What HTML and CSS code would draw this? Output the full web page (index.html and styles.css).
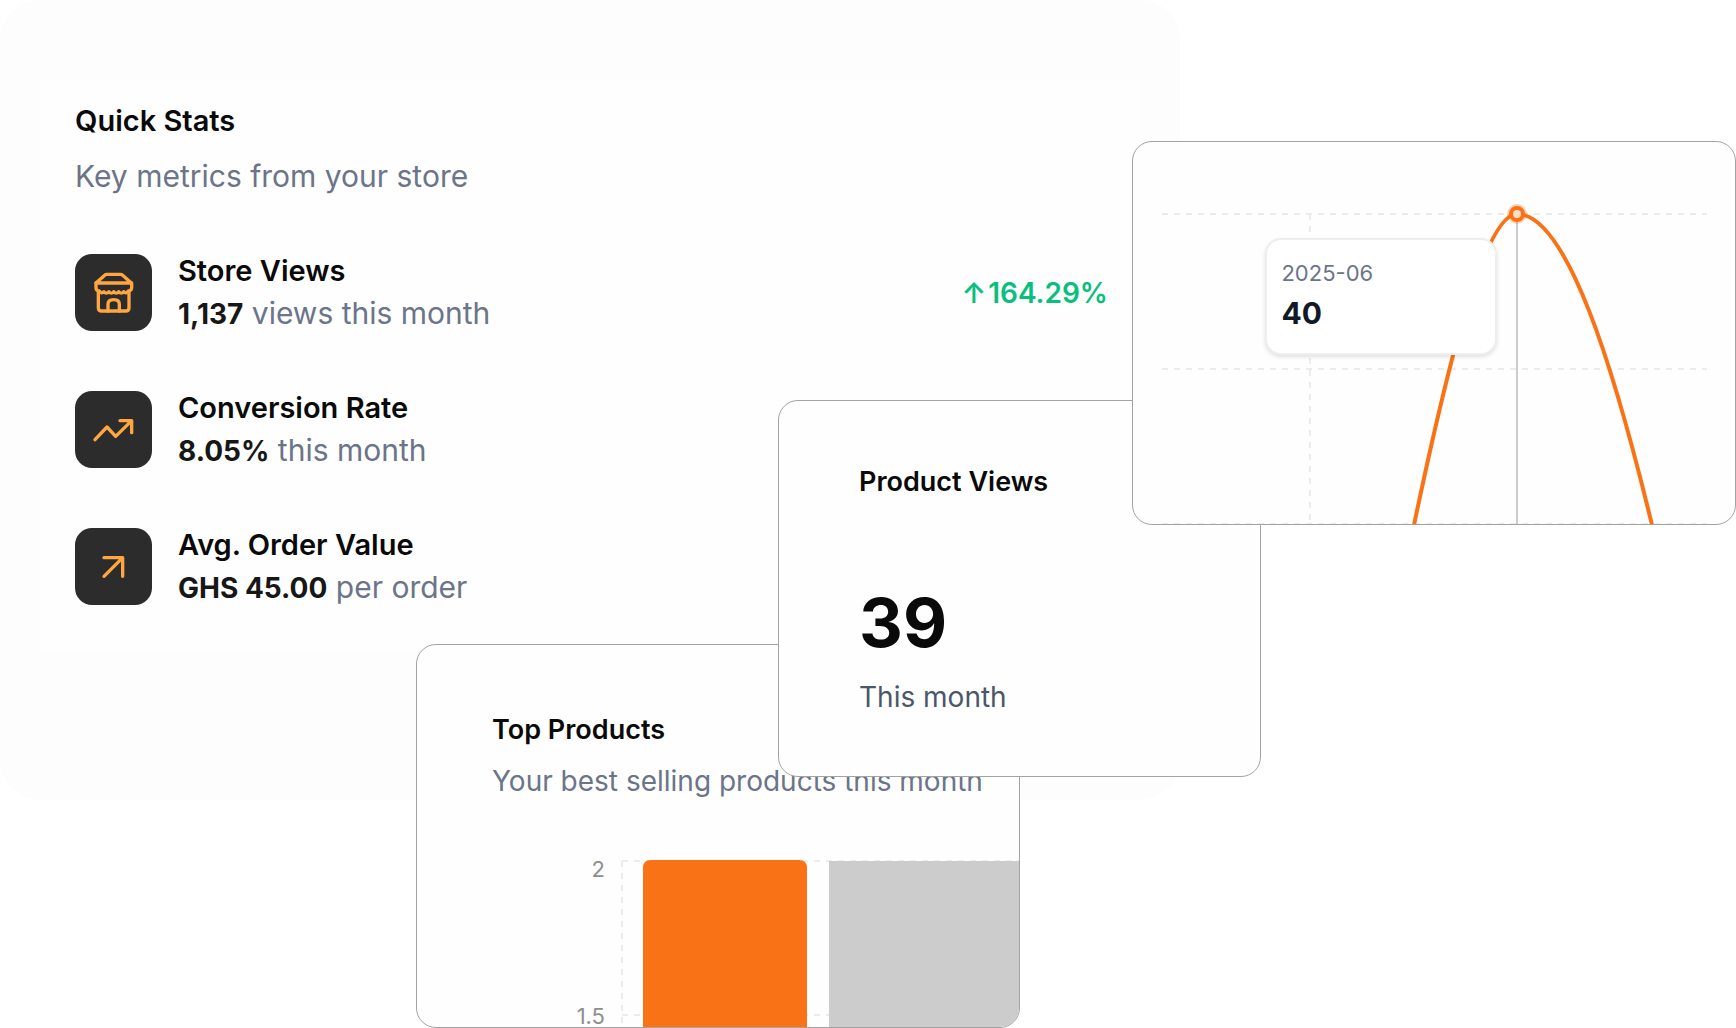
FILE: index.html
```
<!DOCTYPE html>
<html lang="en">
<head>
<meta charset="utf-8">
<meta name="viewport" content="width=device-width, initial-scale=1">
<title>Store analytics</title>
<link rel="stylesheet" href="styles.css">
</head>
<body>
<main class="board">
  <section class="panel">
    <div class="stats">
      <h2 class="title">Quick Stats</h2>
      <p class="subtitle">Key metrics from your store</p>
      <ul class="stat-list">
        <li class="stat">
          <span class="tile">
            <svg class="icon" viewBox="60 70 144 144" aria-hidden="true">
              <path d="M78 112 L105 88 Q107 86 110 86 H152 Q155 86 157 88 L184 112 Z"/>
              <path d="M78 112 V126 Q78 133 85 136 V186 Q85 196 95 196 H167 Q177 196 177 186 V136 Q185 133 185 126 V112"/>
              <path d="M88 136 Q95 146 102 138 Q109 147 117 138 Q124 147 131 138 Q139 147 146 138 Q154 147 161 138 Q168 146 175 136"/>
              <path d="M114 196 V176 Q114 162 131 162 Q148 162 148 176 V196"/>
            </svg>
          </span>
          <div class="stat-text">
            <h3 class="stat-name">Store Views</h3>
            <p class="stat-value"><strong>1,137</strong> views this month</p>
          </div>
          <span class="trend"><span>↑</span><span>164.29%</span></span>
        </li>
        <li class="stat">
          <span class="tile">
            <svg class="icon" viewBox="121 104 144 144" aria-hidden="true">
              <path d="M136 205 L172 167 L198 195 L246 148 M211 148 H246 V184"/>
            </svg>
          </span>
          <div class="stat-text">
            <h3 class="stat-name">Conversion Rate</h3>
            <p class="stat-value"><strong>8.05%</strong> this month</p>
          </div>
        </li>
        <li class="stat">
          <span class="tile">
            <svg class="icon" viewBox="121 514 144 144" aria-hidden="true">
              <path d="M163 614 L219 558 M163 558 H219 V614"/>
            </svg>
          </span>
          <div class="stat-text">
            <h3 class="stat-name">Avg. Order Value</h3>
            <p class="stat-value"><strong>GHS 45.00</strong> per order</p>
          </div>
        </li>
      </ul>
    </div>
  </section>

  <section class="card products">
    <header class="products-head">
      <h2 class="card-title">Top Products</h2>
      <p class="card-subtitle">Your best selling products this month</p>
    </header>
    <svg class="bar-chart" viewBox="417 800 602 227" role="img" aria-label="Units sold per product">
      <path class="grid" d="M622 860 H1019 M622 1014 H1019 M622 860 V1027"/>
      <path fill="#f97316" d="M643 1027 V867 Q643 859 651 859 H799 Q807 859 807 867 V1027 Z"/>
      <path fill="#cccccc" d="M829 860 H1019 V1027 H829 Z"/>
      <text class="tick" x="605" y="876">2</text>
      <text class="tick" x="605" y="1023">1.5</text>
    </svg>
  </section>

  <section class="card views">
    <h2 class="card-title">Product Views</h2>
    <p class="figure">39</p>
    <p class="period">This month</p>
  </section>

  <section class="card trend-card">
    <svg class="line-chart" viewBox="1133 142 602 382" role="img" aria-label="Views per month">
      <path class="grid" d="M1162 214 H1707 M1162 369 H1707 M1162 524 H1707 M1310 214 V524"/>
      <path class="cursor" d="M1517 214 V524"/>
      <path class="line" d="M1414 525 C1444 382 1483 214 1517 214 C1567 214 1614 368 1652 525"/>
      <circle cx="1517" cy="214" r="10" fill="#f97316" opacity="0.3"/>
      <circle cx="1517" cy="214" r="6" fill="#ffdcc8" stroke="#f97316" stroke-width="4"/>
    </svg>
    <div class="tooltip">
      <span class="tooltip-date">2025-06</span>
      <strong class="tooltip-value">40</strong>
    </div>
  </section>
</main>
</body>
</html>
```
FILE: styles.css
```
* {
  box-sizing: border-box;
}

body {
  margin: 0;
  background: #ffffff;
  color: #0a0a0a;
  font-family: Inter, "Liberation Sans", sans-serif;
  font-size: 30px;
  line-height: 40px;
}

h2,
h3,
p,
ul {
  margin: 0;
  padding: 0;
}

/* The cards overlap by sharing cells of one grid. */
.board {
  display: grid;
  grid-template-columns: 416fr 362fr 242fr 112fr 48fr 81fr 475fr;
  grid-template-rows: 141px 259px 125px 119px 133px 23px 228px;
}

.panel {
  grid-area: 1 / 1 / 7 / 6;
  padding: 80px 40px;
  border-radius: 40px;
  background: #fdfdfd;
}

.stats {
  padding: 21px 32px 40px 35px;
  background: #fefefe;
}

.title {
  font-size: 29px;
  font-weight: 600;
}

.subtitle {
  margin-top: 15px;
  color: #6b7488;
}

.stat-list {
  display: grid;
  gap: 50px;
  margin-top: 53px;
  list-style: none;
}

.stat {
  display: flex;
  align-items: center;
  gap: 26px;
}

.tile {
  display: flex;
  flex: none;
  align-items: center;
  justify-content: center;
  width: 77px;
  height: 77px;
  border-radius: 17px;
  background: #2c2c2c;
}

.icon {
  width: 48px;
  height: 48px;
  fill: none;
  stroke: #ffa640;
  stroke-width: 10;
  stroke-linecap: round;
  stroke-linejoin: round;
}

.stat-text {
  flex: 1;
  line-height: 43px;
}

.stat-name {
  font-size: 29px;
  font-weight: 600;
}

.stat-value {
  color: #6b7488;
}

.stat-value strong {
  color: #171717;
  font-size: 28px;
  font-weight: 700;
}

.trend {
  display: flex;
  gap: 2px;
  color: #09bf7e;
  font-size: 28px;
  font-weight: 600;
}

.card {
  overflow: hidden;
  border: 1px solid #a3a3a3;
  border-radius: 20px;
  background: #fefefe;
}

.card-title {
  font-size: 27px;
  font-weight: 600;
}

.products {
  grid-area: 5 / 2 / 8 / 4;
}

.products-head {
  padding: 65px 0 0 75px;
  white-space: nowrap;
}

.card-subtitle {
  margin-top: 11px;
  color: #6b7488;
  font-size: 28px;
}

.bar-chart,
.line-chart {
  display: block;
  width: 100%;
}

.grid {
  fill: none;
  stroke: #ececec;
  stroke-width: 2;
  stroke-dasharray: 6 6;
}

.tick {
  fill: #8e8e8e;
  font-size: 22px;
  text-anchor: end;
}

.views {
  grid-area: 3 / 3 / 6 / 7;
  padding: 61px 80px 0;
}

.figure {
  margin-top: 80px;
  font-size: 68px;
  font-weight: 700;
  line-height: 80px;
}

.period {
  margin-top: 15px;
  color: #4b5768;
  font-size: 28px;
}

.trend-card {
  position: relative;
  grid-area: 2 / 5 / 4 / 8;
}

.cursor {
  stroke: #cccccc;
  stroke-width: 2;
}

.line {
  fill: none;
  stroke: #f97316;
  stroke-width: 4;
}

.tooltip {
  position: absolute;
  top: 25%;
  left: 22%;
  display: grid;
  width: 232px;
  padding: 13px 14px 20px;
  border: 2px solid #eeeeee;
  border-radius: 16px;
  background: #ffffff;
  box-shadow: 0 2px 4px rgb(0 0 0 / 12%);
}

.tooltip-date {
  color: #6b7488;
  font-size: 22px;
}

.tooltip-value {
  color: #111827;
  font-size: 30px;
  font-weight: 700;
}
```
